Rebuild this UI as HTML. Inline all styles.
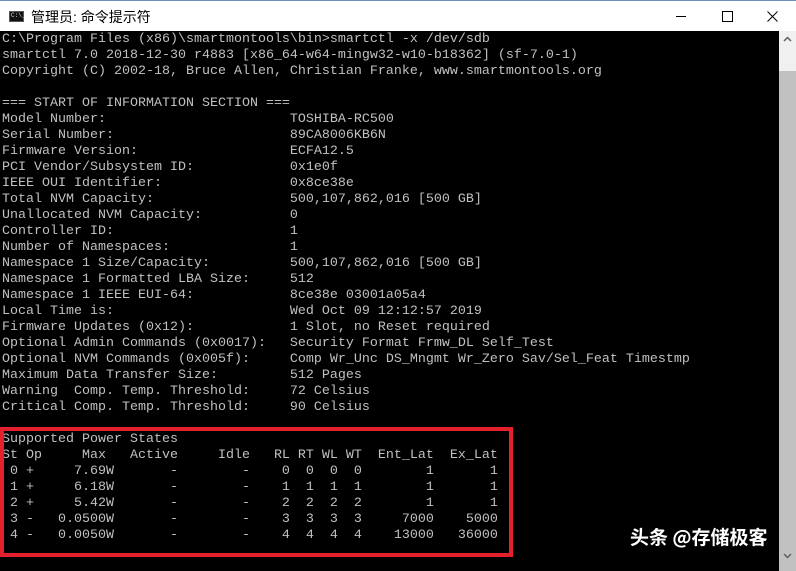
<!DOCTYPE html>
<html><head><meta charset="utf-8"><style>
html,body{margin:0;padding:0;width:796px;height:564px;overflow:hidden;background:#000;}
#title{position:absolute;left:0;top:0;width:796px;height:31px;background:#fff;border-top:1px solid #6a8fb8;box-sizing:border-box;}
#title .t{position:absolute;left:31px;top:6px;font:14px "Liberation Sans","Noto Sans CJK SC",sans-serif;color:#000;}
#icon{position:absolute;left:9px;top:10px;width:15px;height:11px;background:#111;border:1px solid #555;box-sizing:border-box;}
#icon:after{content:"C:\\_";position:absolute;left:1px;top:0;font:6px "Liberation Mono",monospace;color:#ddd;}
.btn{position:absolute;top:0;width:46px;height:31px;}
#con{position:absolute;left:0;top:31px;width:779px;height:533px;background:#000;overflow:hidden;}
pre{margin:0;position:absolute;left:2px;top:1px;font:13.33px/16px "Liberation Mono",monospace;color:#c0c0c0;}
#sb{position:absolute;left:779px;top:31px;width:17px;height:533px;background:#f0f0f0;}
#box{position:absolute;left:0;top:427px;width:513px;height:130px;border:4px solid #e3202b;box-sizing:border-box;}
#wm{position:absolute;left:630px;top:523px;font:bold 19px "Noto Sans CJK SC",sans-serif;color:#fff;text-shadow:0 0 2px #000;}
</style></head><body>
<div id="title"><div id="icon"></div><div class="t">管理员: 命令提示符</div>
<svg class="btn" style="left:658px" viewBox="0 0 46 31"><line x1="18" y1="15.5" x2="28" y2="15.5" stroke="#000"/></svg>
<svg class="btn" style="left:704px" viewBox="0 0 46 31"><rect x="18.5" y="10.5" width="10" height="10" fill="none" stroke="#000"/></svg>
<svg class="btn" style="left:750px" viewBox="0 0 46 31"><path d="M17.5 10.5l10 10M27.5 10.5l-10 10" stroke="#000"/></svg>
</div>
<div id="con"><pre>C:\Program Files (x86)\smartmontools\bin&gt;smartctl -x /dev/sdb
smartctl 7.0 2018-12-30 r4883 [x86_64-w64-mingw32-w10-b18362] (sf-7.0-1)
Copyright (C) 2002-18, Bruce Allen, Christian Franke, www.smartmontools.org

=== START OF INFORMATION SECTION ===
Model Number:                       TOSHIBA-RC500
Serial Number:                      89CA8006KB6N
Firmware Version:                   ECFA12.5
PCI Vendor/Subsystem ID:            0x1e0f
IEEE OUI Identifier:                0x8ce38e
Total NVM Capacity:                 500,107,862,016 [500 GB]
Unallocated NVM Capacity:           0
Controller ID:                      1
Number of Namespaces:               1
Namespace 1 Size/Capacity:          500,107,862,016 [500 GB]
Namespace 1 Formatted LBA Size:     512
Namespace 1 IEEE EUI-64:            8ce38e 03001a05a4
Local Time is:                      Wed Oct 09 12:12:57 2019
Firmware Updates (0x12):            1 Slot, no Reset required
Optional Admin Commands (0x0017):   Security Format Frmw_DL Self_Test
Optional NVM Commands (0x005f):     Comp Wr_Unc DS_Mngmt Wr_Zero Sav/Sel_Feat Timestmp
Maximum Data Transfer Size:         512 Pages
Warning  Comp. Temp. Threshold:     72 Celsius
Critical Comp. Temp. Threshold:     90 Celsius

Supported Power States
St Op     Max   Active     Idle   RL RT WL WT  Ent_Lat  Ex_Lat
 0 +     7.69W       -        -    0  0  0  0        1       1
 1 +     6.18W       -        -    1  1  1  1        1       1
 2 +     5.42W       -        -    2  2  2  2        1       1
 3 -   0.0500W       -        -    3  3  3  3     7000    5000
 4 -   0.0050W       -        -    4  4  4  4    13000   36000
</pre></div>
<div id="sb">
<svg style="position:absolute;left:0;top:0" width="17" height="17"><path d="M5 10l3.5-3.5L12 10" fill="none" stroke="#606060" stroke-width="1.5"/></svg>
<div style="position:absolute;left:0;top:40px;width:17px;height:500px;background:#c1c1c1;"></div>
<svg style="position:absolute;left:0;top:516px" width="17" height="17"><path d="M5 7l3.5 3.5L12 7" fill="none" stroke="#606060" stroke-width="1.5"/></svg>
</div>
<div id="box"></div>
<div id="wm">头条 @存储极客</div>
</body></html>
